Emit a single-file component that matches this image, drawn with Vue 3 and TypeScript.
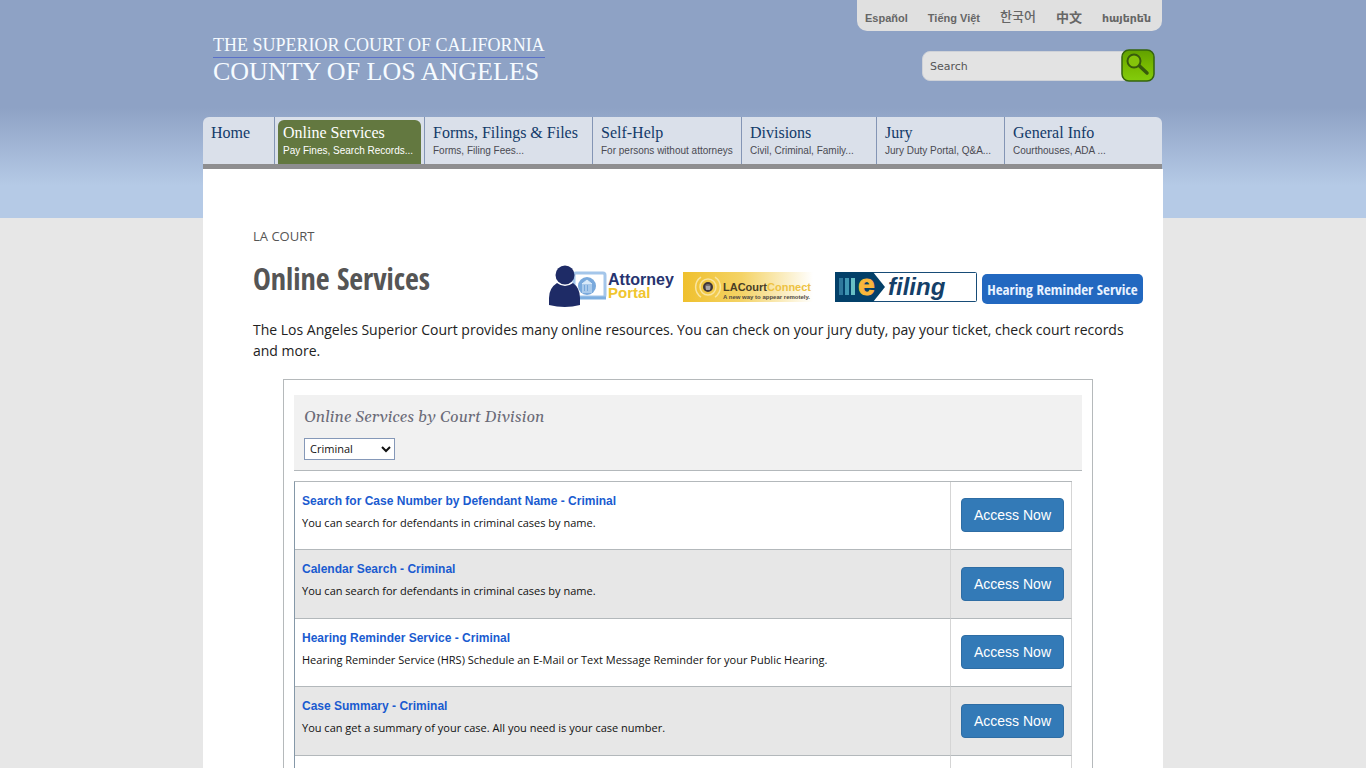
<script setup lang="ts">
import { ref } from 'vue'

interface NavItem { title: string; sub: string; width: string; active?: boolean }
interface Service { title: string; text: string }

const query = ref('')
const division = ref('Criminal')

const languages: { name: string; code: string }[] = [
  { name: 'Español', code: 'es' },
  { name: 'Tiếng Việt', code: 'vi' },
  { name: '한국어', code: 'ko' },
  { name: '中文', code: 'zh' },
  { name: 'հայերեն', code: 'hy' },
]

const nav: NavItem[] = [
  { title: 'Home', sub: '', width: '72fr' },
  { title: 'Online Services', sub: 'Pay Fines, Search Records...', width: '150fr', active: true },
  { title: 'Forms, Filings & Files', sub: 'Forms, Filing Fees...', width: '168fr' },
  { title: 'Self-Help', sub: 'For persons without attorneys', width: '149fr' },
  { title: 'Divisions', sub: 'Civil, Criminal, Family...', width: '135fr' },
  { title: 'Jury', sub: 'Jury Duty Portal, Q&A...', width: '128fr' },
  { title: 'General Info', sub: 'Courthouses, ADA ...', width: '157fr' },
]
const navColumns = nav.map((n) => n.width).join(' ')

const services: Service[] = [
  { title: 'Search for Case Number by Defendant Name - Criminal', text: 'You can search for defendants in criminal cases by name.' },
  { title: 'Calendar Search - Criminal', text: 'You can search for defendants in criminal cases by name.' },
  { title: 'Hearing Reminder Service - Criminal', text: 'Hearing Reminder Service (HRS) Schedule an E-Mail or Text Message Reminder for your Public Hearing.' },
  { title: 'Case Summary - Criminal', text: 'You can get a summary of your case. All you need is your case number.' },
]
</script>

<template>
  <div class="page">
    <div class="wrap">
      <header class="header">
        <a class="brand" href="#">
          <span class="brand-top">THE SUPERIOR COURT OF CALIFORNIA</span>
          <span class="brand-bottom">COUNTY OF LOS ANGELES</span>
        </a>
        <div class="tools">
          <div class="langs">
            <a v-for="l in languages" :key="l.code" href="#" :lang="l.code">{{ l.name }}</a>
          </div>
          <form class="search" @submit.prevent>
            <input v-model="query" type="text" placeholder="Search" aria-label="Search" />
            <button type="submit" aria-label="Submit search">
              <svg width="36" height="34" viewBox="0 0 36 34">
                <defs>
                  <linearGradient id="green" x1="0" y1="0" x2="0" y2="1">
                    <stop offset="0" stop-color="#61a000" />
                    <stop offset="0.5" stop-color="#77b900" />
                    <stop offset="1" stop-color="#83cc0c" />
                  </linearGradient>
                </defs>
                <rect x="2" y="1" width="32" height="31" rx="7" fill="url(#green)" stroke="#35640c" stroke-width="1.5" />
                <path d="M19 16.500 27 24" stroke="#385b0c" stroke-width="3.500" stroke-linecap="round" />
                <circle cx="14" cy="12" r="6.500" fill="#85c40a" stroke="#385b0c" stroke-width="2" />
              </svg>
            </button>
          </form>
        </div>
      </header>

      <nav class="nav" :style="{ gridTemplateColumns: navColumns }">
        <a v-for="n in nav" :key="n.title" href="#" class="nav-item" :class="{ active: n.active }">
          <span class="nav-inner">
            <span class="nav-title">{{ n.title }}</span>
            <span v-if="n.sub" class="nav-sub">{{ n.sub }}</span>
          </span>
        </a>
      </nav>

      <main class="main">
        <a class="crumb" href="#">LA COURT</a>
        <div class="head">
          <h1>Online Services</h1>
          <div class="promos">
            <a href="#" class="attorney" aria-label="Attorney Portal">
              <svg width="126" height="44" viewBox="0 0 126 44">
                <rect x="26" y="8" width="31" height="24" rx="2" fill="#fff" stroke="#a4c6ea" stroke-width="3" />
                <path d="M25 33H58" stroke="#7eafe0" stroke-width="3" />
                <circle cx="39" cy="21" r="9" fill="#79a9dc" />
                <path d="M34 19 39 15 44 19ZM35 20v6M38 20v6M41 20v6M43 20v6M34 27H44" stroke="#d9eafa" stroke-width="1" fill="#d9eafa" />
                <circle cx="17" cy="10" r="9.500" fill="#1e2b66" />
                <path d="M1 40V33Q1 23 9 18Q17 24 25 18Q32 23 32 33V40Q17 44 1 40Z" fill="#1e2b66" />
                <text x="60" y="20" class="logo-bold" font-size="16" fill="#26336f">Attorney</text>
                <text x="60" y="33" class="logo-bold" font-size="15" fill="#f0c52f">Portal</text>
              </svg>
            </a>
            <a href="#" class="connect" aria-label="LACourtConnect">
              <svg width="130" height="30" viewBox="0 0 130 30">
                <defs>
                  <linearGradient id="gold">
                    <stop offset="0" stop-color="#efc02d" />
                    <stop offset="0.45" stop-color="#f4d366" />
                    <stop offset="1" stop-color="#fff" />
                  </linearGradient>
                </defs>
                <rect width="130" height="30" fill="url(#gold)" />
                <g fill="none" stroke="#f9e5a0" stroke-width="1.500">
                  <circle cx="25" cy="15" r="8" />
                  <path d="M18 5A12 12 0 0 0 18 25M32 5A12 12 0 0 1 32 25" />
                </g>
                <circle cx="25" cy="15" r="4" fill="#746e70" stroke="#3f3639" stroke-width="2" />
                <path d="M23 15h4M23 17h4" stroke="#ddd" />
                <text x="40" y="19" class="logo-bold" font-size="11" fill="#493d25">LACourt<tspan fill="#edc242">Connect</tspan></text>
                <text x="40" y="27" class="logo-bold" font-size="6" fill="#504b42">A new way to appear remotely.</text>
              </svg>
            </a>
            <a href="#" class="efiling" aria-label="e filing">
              <svg width="142" height="30" viewBox="0 0 142 30">
                <rect x="0.500" y="0.500" width="141" height="29" rx="1" fill="#fff" stroke="#174c77" />
                <path d="M0 0H38L50 15 38 30H0Z" fill="#034069" />
                <path d="M4 6h4v17H4Z" fill="#2f789c" />
                <path d="M10 6h4v17h-4Z" fill="#4097b3" />
                <path d="M16 6h4v17h-4Z" fill="#68bfc5" />
                <text x="23" y="23" class="logo-bold" font-size="30" fill="#f9b63b" stroke="#f9b63b" stroke-width="1">e</text>
                <text x="53" y="23" class="logo-bold" font-style="italic" font-size="24" fill="#143f68">filing</text>
              </svg>
            </a>
            <a href="#" class="reminder">Hearing Reminder Service</a>
          </div>
        </div>
        <p class="intro">The Los Angeles Superior Court provides many online resources. You can check on your jury duty, pay your ticket, check court records and more.</p>

        <section class="panel">
          <div class="filter">
            <label for="division">Online Services by Court Division</label>
            <div class="select-box">
              <select id="division" v-model="division">
                <option>Criminal</option>
              </select>
              <svg width="10" height="8" viewBox="0 0 10 8"><path d="M1 2 5 6 9 2" fill="none" stroke="#111" stroke-width="2" /></svg>
            </div>
          </div>
          <table class="services">
            <tbody>
              <tr v-for="s in services" :key="s.title">
                <td class="info">
                  <a href="#">{{ s.title }}</a>
                  <p>{{ s.text }}</p>
                </td>
                <td class="action"><button type="button">Access Now</button></td>
              </tr>
              <tr><td class="info"></td><td class="action"></td></tr>
            </tbody>
          </table>
        </section>
      </main>
    </div>
  </div>
</template>

<style>
body {
  margin: 0;
  background: #e7e7e7;
}
</style>

<style scoped>
* {
  box-sizing: border-box;
}
.page {
  height: 100vh;
  overflow: hidden;
  background: linear-gradient(#8ea2c5 0, #8ea2c5 108px, #b5cae6 186px, #b5cae6 218px, #e7e7e7 218px);
  font-family: "Open Sans", "Noto Sans", sans-serif;
}
a {
  text-decoration: none;
}
.wrap {
  max-width: 960px;
  margin: 0 auto;
}
.header {
  display: flex;
  justify-content: space-between;
  height: 117px;
}
.brand {
  display: flex;
  flex-direction: column;
  padding: 36px 0 0 10px;
  color: #f6fbff;
  font-family: "Liberation Serif", serif;
  white-space: nowrap;
}
.brand-top {
  height: 22px;
  border-bottom: 1px solid #5a70c8;
  font-size: 18px;
  line-height: 18px;
}
.brand-bottom {
  font-size: 26px;
  line-height: 28px;
}
.tools {
  display: flex;
  flex-direction: column;
  align-items: flex-end;
}
.langs {
  display: flex;
  justify-content: space-between;
  width: 305px;
  height: 31px;
  margin-right: 1px;
  padding: 8px 11px 0 8px;
  border-radius: 0 0 10px 10px;
  background: #e0e0e0;
  font-family: "Liberation Sans", "Noto Sans CJK KR", "DejaVu Sans", sans-serif;
  font-weight: bold;
  font-size: 11px;
  line-height: 20px;
}
.langs a {
  color: #666;
  white-space: nowrap;
}
.langs a:lang(ko) {
  font-size: 13px;
  font-weight: 500;
  line-height: 18px;
}
.langs a:lang(zh) {
  font-family: "Noto Sans CJK SC", sans-serif;
  font-size: 13px;
  line-height: 18px;
}
.search {
  display: flex;
  margin: 18px 7px 0 0;
}
.search input {
  width: 204px;
  height: 30px;
  margin: 2px -6px 0 0;
  padding: 0 7px;
  border: 1px solid #cfd2d8;
  border-radius: 8px 0 0 8px;
  background: #e3e3e3;
  font: 11px "DejaVu Sans", sans-serif;
  color: #555;
}
.search input::placeholder {
  color: #555;
  opacity: 1;
}
.search button {
  position: relative;
  width: 36px;
  height: 34px;
  padding: 0;
  border: 0;
  background: none;
}
.search svg {
  display: block;
}
.nav {
  display: grid;
  margin-right: 1px;
  border-bottom: 5px solid #8e8e90;
  border-radius: 6px 6px 0 0;
  background: #dae0ea;
}
.nav-item {
  display: flex;
  min-width: 0;
  height: 47px;
  border-right: 1px solid #8395b5;
  color: #123a69;
  white-space: nowrap;
}
.nav-item:last-child {
  border-right: 0;
}
.nav-inner {
  flex: 1;
  padding: 7px 0 0 8px;
}
.active .nav-inner {
  margin: 3px 3px 0;
  padding: 4px 0 0 5px;
  border-radius: 6px 6px 0 0;
  background: #637840;
  color: #fff;
}
.nav-title {
  display: block;
  font: 16px/18px "Liberation Serif", serif;
}
.nav-sub {
  display: block;
  padding-top: 2px;
  color: #4a4a52;
  font: 10px/14px "Liberation Sans", sans-serif;
}
.active .nav-sub {
  color: #fff;
}
.main {
  min-height: 700px;
  padding: 57px 20px 0 50px;
  background: #fff;
}
.crumb {
  display: block;
  color: #555;
  font-size: 13px;
  font-weight: 500;
  line-height: 20px;
}
.head {
  display: flex;
  justify-content: space-between;
  height: 73px;
  padding-top: 1px;
}
h1 {
  margin: 12px 0 0;
  color: #555;
  font-family: "Open Sans Condensed", "Roboto Condensed", "Open Sans", sans-serif;
  font-size: 30px;
  font-weight: bold;
  line-height: 40px;
}
.promos {
  display: flex;
  align-items: flex-start;
}
.promos svg {
  display: block;
}
.logo-bold {
  font-family: "Liberation Sans", sans-serif;
  font-weight: bold;
}
.attorney {
  margin: 18px 9px 0 0;
}
.connect {
  margin: 25px 22px 0 0;
}
.efiling {
  margin: 25px 5px 0 0;
}
.reminder {
  width: 161px;
  height: 30px;
  margin-top: 27px;
  border-radius: 5px;
  background: #2268c0;
  color: #e8f2ff;
  font-family: "Open Sans Condensed", "Roboto Condensed", "Open Sans", sans-serif;
  font-size: 15px;
  font-weight: bold;
  line-height: 30px;
  text-align: center;
  white-space: nowrap;
}
.intro {
  margin: 0 10px 0 0;
  color: #222;
  font-size: 14px;
  line-height: 21px;
}
.panel {
  margin: 18px 50px 0 30px;
  padding: 15px 10px 0;
  border: 1px solid #b5b9bb;
}
.filter {
  height: 76px;
  padding: 12px 10px 0;
  border-bottom: 1px solid #b3b8bb;
  background: #f1f1f1;
}
.filter label {
  display: block;
  color: #6b6b78;
  font: italic 16px/20px Georgia, Gelasio, "Liberation Serif", serif;
}
.select-box {
  display: grid;
  width: 91px;
  margin-top: 11px;
}
.select-box select {
  grid-area: 1 / 1;
  height: 22px;
  padding: 0 5px 1px;
  border: 1px solid #8598b8;
  border-radius: 0;
  background: #fff;
  appearance: none;
  color: #111;
  font: 11px "Open Sans", sans-serif;
}
.select-box svg {
  grid-area: 1 / 1;
  align-self: center;
  justify-self: end;
  margin-right: 4px;
  pointer-events: none;
}
.services {
  width: calc(100% - 10px);
  margin-top: 10px;
  border-spacing: 0;
  border-top: 1px solid #b3b8bb;
  border-left: 1px solid #8598a8;
}
.services tr {
  height: 68px;
}
.services tr:nth-child(even) {
  height: 69px;
  background: #e7e7e7;
}
.services td {
  padding: 0;
  border-right: 1px solid #d5d5d5;
  border-bottom: 1px solid #b3b8bb;
}
.services .info {
  padding: 10px 7px 0;
  vertical-align: top;
}
.info a {
  display: block;
  color: #1a5bd0;
  font: bold 12px/18px "Liberation Sans", sans-serif;
}
.info p {
  margin: 5px 0 0;
  color: #111;
  font-size: 11px;
  line-height: 16px;
}
.services .action {
  width: 121px;
  padding: 0 0 1px 3px;
  text-align: center;
  vertical-align: middle;
}
.action button {
  width: 103px;
  height: 34px;
  padding: 0;
  border: 1px solid #2e6da4;
  border-radius: 4px;
  background: #337ab7;
  color: #fff;
  font: 14px "Liberation Sans", sans-serif;
}
</style>
